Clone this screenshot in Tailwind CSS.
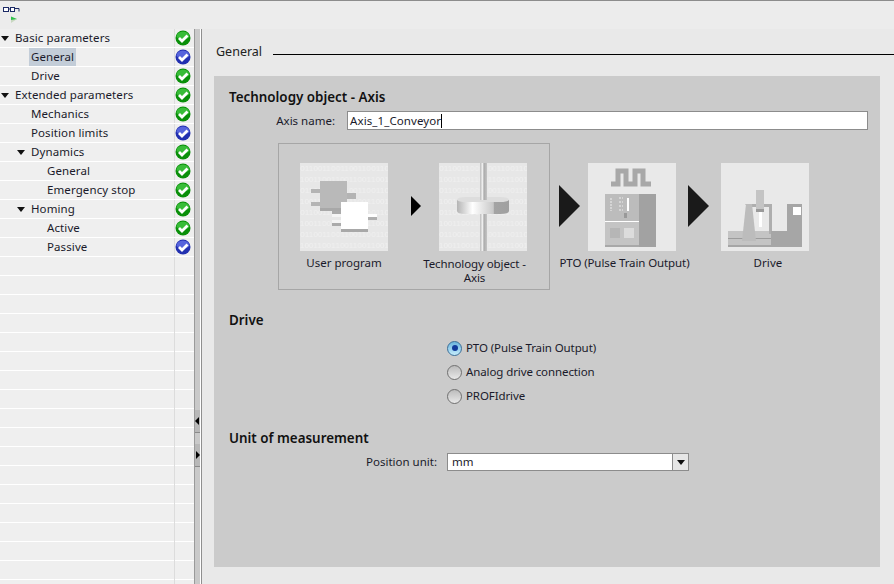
<!DOCTYPE html>
<html lang="en">
<head>
    <meta charset="UTF-8">
    <title>Technology object - Axis</title>
    <script src="https://cdn.jsdelivr.net/npm/@tailwindcss/browser@4"></script>
</head>
<body class="m-0 overflow-hidden bg-[#e9e9e9] font-['Noto_Sans',sans-serif] text-[11.5px] tracking-[0.1px] text-[#1a1a2a]">
<svg width="0" height="0" class="absolute">
    <defs>
        <symbol id="ok-green" viewBox="0 0 16 16">
            <circle cx="8" cy="8" r="7.5" fill="#0a8f0a"/>
            <path d="M1.5 7a6.5 5.5 0 0 1 13 0a8 6 0 0 1-13 0z" fill="#38bc38"/>
            <path d="M4 8l3 3 5.5-5.5" fill="none" stroke="#fff" stroke-width="2.8"/>
        </symbol>
        <symbol id="ok-blue" viewBox="0 0 16 16">
            <circle cx="8" cy="8" r="7.5" fill="#2230b0"/>
            <path d="M1.5 7a6.5 5.500 0 0 1 13 0a8 6 0 0 1-13 0z" fill="#5664dc"/>
            <path d="M4 8l3 3 5.5-5.5" fill="none" stroke="#fff" stroke-width="2.8"/>
        </symbol>
        <symbol id="tri" viewBox="0 0 8 5">
            <path d="M0 0h8L4 5z" fill="#111"/>
        </symbol>
        <pattern id="bits" width="35.6" height="22" patternUnits="userSpaceOnUse">
            <rect width="36" height="22" fill="#e7e7e7"/>
            <text x="-8.9" y="8" font-family="Liberation Sans" font-size="8" fill="#f1f1f1">100110011001</text>
            <text x="-17.8" y="19" font-family="Liberation Sans" font-size="8" fill="#f1f1f1">1001100110011</text>
        </pattern>
    </defs>
</svg>

<div class="flex h-[584px] w-[894px] flex-col">
    <div class="h-[1px] bg-[#8c8c8c]"></div>
    <!-- toolbar -->
    <div class="flex h-[28px] items-start bg-[#ececec] pl-[3px] pt-[5px]">
        <svg width="18" height="18" viewBox="0 0 18 18">
            <rect x="0.5" y="1.500" width="5" height="4" fill="#fff" stroke="#1c2a66"/>
            <rect x="7.5" y="1.500" width="4" height="4" fill="#fff" stroke="#1c2a66"/>
            <path d="M5.5 3h2M11.5 2.500h4.500v3" fill="none" stroke="#1c2a66"/>
            <path d="M8 10.500l6 2.500-6 2.500z" fill="#2fc04a"/>
            <path d="M8 14l6-1-6 4z" fill="#c8d8c0"/>
        </svg>
    </div>

    <div class="flex min-h-0 flex-1">
        <!-- tree -->
        <div class="w-[194px] shrink-0 overflow-hidden bg-[#efefef]">
            <div class="flex h-[19px] border-b border-white">
                <div class="flex w-[174px] items-center pl-[1px]"><svg width="8" height="5"><use href="#tri"/></svg><span class="ml-[6px]">Basic parameters</span></div>
                <div class="flex w-[20px] items-center justify-center border-l border-[#dcdcdc] pr-[3px]"><svg width="16" height="16"><use href="#ok-green"/></svg></div>
            </div>
            <div class="flex h-[19px] border-b border-white">
                <div class="flex w-[174px] items-center pl-[29px]"><span class="bg-[#c3cdd8] px-[2px] leading-[18px]">General</span></div>
                <div class="flex w-[20px] items-center justify-center border-l border-[#dcdcdc] pr-[3px]"><svg width="16" height="16"><use href="#ok-blue"/></svg></div>
            </div>
            <div class="flex h-[19px] border-b border-white">
                <div class="flex w-[174px] items-center pl-[31px]">Drive</div>
                <div class="flex w-[20px] items-center justify-center border-l border-[#dcdcdc] pr-[3px]"><svg width="16" height="16"><use href="#ok-green"/></svg></div>
            </div>
            <div class="flex h-[19px] border-b border-white">
                <div class="flex w-[174px] items-center pl-[1px]"><svg width="8" height="5"><use href="#tri"/></svg><span class="ml-[6px]">Extended parameters</span></div>
                <div class="flex w-[20px] items-center justify-center border-l border-[#dcdcdc] pr-[3px]"><svg width="16" height="16"><use href="#ok-green"/></svg></div>
            </div>
            <div class="flex h-[19px] border-b border-white">
                <div class="flex w-[174px] items-center pl-[31px]">Mechanics</div>
                <div class="flex w-[20px] items-center justify-center border-l border-[#dcdcdc] pr-[3px]"><svg width="16" height="16"><use href="#ok-green"/></svg></div>
            </div>
            <div class="flex h-[19px] border-b border-white">
                <div class="flex w-[174px] items-center pl-[31px]">Position limits</div>
                <div class="flex w-[20px] items-center justify-center border-l border-[#dcdcdc] pr-[3px]"><svg width="16" height="16"><use href="#ok-blue"/></svg></div>
            </div>
            <div class="flex h-[19px] border-b border-white">
                <div class="flex w-[174px] items-center pl-[17px]"><svg width="8" height="5"><use href="#tri"/></svg><span class="ml-[6px]">Dynamics</span></div>
                <div class="flex w-[20px] items-center justify-center border-l border-[#dcdcdc] pr-[3px]"><svg width="16" height="16"><use href="#ok-green"/></svg></div>
            </div>
            <div class="flex h-[19px] border-b border-white">
                <div class="flex w-[174px] items-center pl-[47px]">General</div>
                <div class="flex w-[20px] items-center justify-center border-l border-[#dcdcdc] pr-[3px]"><svg width="16" height="16"><use href="#ok-green"/></svg></div>
            </div>
            <div class="flex h-[19px] border-b border-white">
                <div class="flex w-[174px] items-center pl-[47px]">Emergency stop</div>
                <div class="flex w-[20px] items-center justify-center border-l border-[#dcdcdc] pr-[3px]"><svg width="16" height="16"><use href="#ok-green"/></svg></div>
            </div>
            <div class="flex h-[19px] border-b border-white">
                <div class="flex w-[174px] items-center pl-[17px]"><svg width="8" height="5"><use href="#tri"/></svg><span class="ml-[6px]">Homing</span></div>
                <div class="flex w-[20px] items-center justify-center border-l border-[#dcdcdc] pr-[3px]"><svg width="16" height="16"><use href="#ok-green"/></svg></div>
            </div>
            <div class="flex h-[19px] border-b border-white">
                <div class="flex w-[174px] items-center pl-[47px]">Active</div>
                <div class="flex w-[20px] items-center justify-center border-l border-[#dcdcdc] pr-[3px]"><svg width="16" height="16"><use href="#ok-green"/></svg></div>
            </div>
            <div class="flex h-[19px] border-b border-white">
                <div class="flex w-[174px] items-center pl-[47px]">Passive</div>
                <div class="flex w-[20px] items-center justify-center border-l border-[#dcdcdc] pr-[3px]"><svg width="16" height="16"><use href="#ok-blue"/></svg></div>
            </div>
            <!-- empty rows -->
            <div class="h-[328px] bg-[repeating-linear-gradient(to_bottom,#efefef_0,#efefef_18px,#fff_18px,#fff_19px)] pl-[174px]"><div class="h-full border-l border-[#dcdcdc]"></div></div>
        </div>

        <!-- scrollbar / splitter -->
        <div class="relative w-[7px] shrink-0 border-l border-r border-l-[#9a9a9a] border-r-white bg-[#c9c9c9]">
            <div class="absolute left-0 top-[381px] flex h-[23px] w-[5px] items-center bg-[#b8b8b8] border-b border-[#8a8a8a]"><div class="h-0 w-0 border-y-[4px] border-r-[4px] border-y-transparent border-r-black"></div></div>
            <div class="absolute left-0 top-[415px] flex h-[23px] w-[5px] items-center justify-end bg-[#b8b8b8] border-b border-[#8a8a8a]"><div class="h-0 w-0 border-y-[4px] border-l-[4px] border-y-transparent border-l-black"></div></div>
        </div>

        <!-- main -->
        <div class="min-w-0 flex-1 border-l border-[#8f8f8f] pl-[12px] pr-[14px] pt-[13px]">
            <div class="flex h-[34px] items-start">
                <span class="pl-[2px] text-[12.5px] leading-[20px] tracking-normal text-[#222]">General</span>
                <div class="ml-[11px] mr-[-14px] mt-[12px] h-[1px] flex-1 bg-black"></div>
            </div>
            <div class="h-[491px] bg-[#cbcbcb] pl-[15px] pt-[13px]">
                <h3 class="text-[13.4px] font-semibold leading-[16px] tracking-normal text-[#111]">Technology object - Axis</h3>
                <div class="mt-[6px] flex h-[19px] items-center">
                    <label class="w-[106px] text-right tracking-normal">Axis name:</label>
                    <div class="ml-[12px] flex h-[19px] w-[521px] items-center border border-[#8c8c8c] bg-white pl-[2px]"><span>Axis_1_Conveyor</span><span class="h-[14px] w-[1px] bg-black"></span></div>
                </div>

                <!-- diagram -->
                <div class="mt-[13px] flex items-start pl-[49px]">
                    <div class="h-[147px] w-[272px] border border-[#a6a6a6] pl-[21px] pt-[19px]">
                        <div class="flex items-start">
                            <div class="w-[88px]">
                                <svg class="block" width="88" height="88" viewBox="0 0 88 88">
                                    <rect width="88" height="88" fill="url(#bits)"/>
                                    <path d="M11 26h9v4h-9zM11 39h9v4h-9zM47 30h9v6h-9z" fill="#b4b4b4"/>
                                    <rect x="20" y="18" width="27" height="27" fill="#b9b9b9"/>
                                    <rect x="20" y="45" width="27" height="3" fill="#a8a8a8"/>
                                    <path d="M32 48h9v3h-9zM32 60h9v3h-9z" fill="#aaa"/>
                                    <path d="M32 51h9v3h-9zM32 57h9v3h-9z" fill="#f4f4f4"/>
                                    <rect x="41" y="39" width="27" height="27" fill="#fff"/>
                                    <rect x="68" y="51" width="9" height="3" fill="#fff"/>
                                    <rect x="68" y="54" width="9" height="3" fill="#b0b0b0"/>
                                    <rect x="41" y="66" width="27" height="3" fill="#a8a8a8"/>
                                </svg>
                                <div class="mt-[4px] text-center leading-[16px] tracking-normal">User program</div>
                            </div>
                            <div class="ml-[23px] mt-[33px] h-0 w-0 border-y-[10px] border-l-[10px] border-y-transparent border-l-black"></div>
                            <div class="ml-[18px] w-[88px]">
                                <svg class="block" width="88" height="88" viewBox="0 0 88 88">
                                    <defs>
                                        <linearGradient id="rod"><stop offset="0" stop-color="#bbb"/><stop offset=".4" stop-color="#f4f4f4"/><stop offset=".55" stop-color="#aaa"/><stop offset="1" stop-color="#c4c4c4"/></linearGradient>
                                        <linearGradient id="disc"><stop offset="0" stop-color="#b4b4b4"/><stop offset=".3" stop-color="#fff"/><stop offset=".7" stop-color="#c8c8c8"/><stop offset=".71" stop-color="#a4a4a4"/><stop offset="1" stop-color="#a0a0a0"/></linearGradient>
                                    </defs>
                                    <rect width="88" height="88" fill="url(#bits)"/>
                                    <rect x="41" y="0" width="7" height="88" fill="url(#rod)"/>
                                    <path d="M18 37v11q0 3 9 3h34q9 0 9-3V37z" fill="url(#disc)"/>
                                    <path d="M18 37q0-3 9-3h14v3h7v-3h13q9 0 9 3q-2 2-9 2H27q-7 0-9-2z" fill="#ddd"/>
                                </svg>
                                <div class="ml-[-25px] mr-[-8px] mt-[6px] whitespace-nowrap text-center leading-[14px] tracking-[-0.1px]">Technology object -<br>Axis</div>
                            </div>
                        </div>
                    </div>
                    <div class="ml-[9px] mt-[42px] h-0 w-0 border-y-[21px] border-l-[21px] border-y-transparent border-l-[#1a1a1a]"></div>
                    <div class="ml-[8px] mt-[20px] w-[88px]">
                        <svg class="block" width="88" height="88" viewBox="0 0 88 88">
                            <rect width="88" height="88" fill="#e9e9e9"/>
                            <path d="M23 21h7V8h8v13h9V8h8v13h8" fill="none" stroke="#a8a8a8" stroke-width="5"/>
                            <rect x="17" y="31" width="51" height="53" fill="#bcbcbc"/>
                            <rect x="51" y="31" width="17" height="53" fill="#a2a2a2"/>
                            <rect x="17" y="58" width="34" height="1" fill="#fff"/>
                            <rect x="17" y="59" width="34" height="25" fill="#c4c4c4"/>
                            <rect x="17" y="82" width="34" height="2" fill="#a8a8a8"/>
                            <rect x="39" y="35" width="2" height="13" fill="#fff"/>
                            <path d="M23 35v13M31 35h4M31 39h4M31 43h4M31 47h4" stroke="#eee" fill="none" stroke-dasharray="2 1"/>
                            <rect x="36" y="50" width="3" height="5" fill="#999"/>
                            <rect x="22" y="65" width="10" height="10" fill="#b6b6b6"/>
                            <rect x="36" y="65" width="10" height="10" fill="#dcdcdc"/>
                        </svg>
                        <div class="ml-[-40px] mr-[-25px] mt-[4px] whitespace-nowrap text-center leading-[16px] tracking-[-0.1px]">PTO (Pulse Train Output)</div>
                    </div>
                    <div class="ml-[12px] mt-[42px] h-0 w-0 border-y-[21px] border-l-[21px] border-y-transparent border-l-[#1a1a1a]"></div>
                    <div class="ml-[12px] mt-[20px] w-[88px]">
                        <svg class="block" width="88" height="88" viewBox="0 0 88 88">
                            <rect width="88" height="88" fill="#e9e9e9"/>
                            <rect x="7" y="68" width="60" height="16" fill="#c4c4c4"/>
                            <rect x="7" y="75" width="60" height="1" fill="#9c9c9c"/>
                            <rect x="7" y="82" width="74" height="2" fill="#a6a6a6"/>
                            <path d="M24 41h27v30h-3V44H27z" fill="#aeaeae"/>
                            <path d="M21 78l4-37h6l4 37z" fill="#bcbcbc"/>
                            <rect x="35" y="27" width="8" height="21" fill="#c4c4c4"/>
                            <rect x="35" y="46" width="8" height="3" fill="#9a9a9a"/>
                            <rect x="38" y="49" width="3" height="15" fill="#fff"/>
                            <rect x="50" y="68" width="19" height="16" fill="#a6a6a6"/>
                            <rect x="66" y="41" width="15" height="41" fill="#a6a6a6"/>
                            <rect x="72" y="44" width="8" height="8" fill="#fff"/>
                        </svg>
                        <div class="ml-[3px] mr-[-3px] mt-[4px] text-center leading-[16px]">Drive</div>
                    </div>
                </div>

                <h3 class="mt-[22px] text-[13.4px] font-semibold leading-[16px] tracking-normal text-[#111]">Drive</h3>

                <div class="ml-[218px] mt-[12px] flex flex-col gap-[8px]">
                    <div class="flex h-[16px] items-center gap-[4px]">
                        <div class="flex size-[15px] items-center justify-center rounded-full border border-[#3a6e98] bg-gradient-to-b from-[#6ab4dc] to-[#c4ecfc]"><div class="size-[6px] rounded-full bg-[#123a9a]"></div></div>
                        <span class="tracking-[-0.1px]">PTO (Pulse Train Output)</span>
                    </div>
                    <div class="flex h-[16px] items-center gap-[4px]">
                        <div class="size-[15px] rounded-full border border-[#707070] bg-gradient-to-b from-[#bcbcbc] to-[#e8e8e8]"></div>
                        <span class="tracking-[-0.1px]">Analog drive connection</span>
                    </div>
                    <div class="flex h-[16px] items-center gap-[4px]">
                        <div class="size-[15px] rounded-full border border-[#707070] bg-gradient-to-b from-[#bcbcbc] to-[#e8e8e8]"></div>
                        <span class="tracking-[-0.1px]">PROFIdrive</span>
                    </div>
                </div>

                <h3 class="mt-[26px] text-[13.4px] font-semibold leading-[16px] tracking-normal text-[#111]">Unit of measurement</h3>
                <div class="mt-[7px] flex h-[18px] items-center">
                    <label class="w-[208px] text-right tracking-normal">Position unit:</label>
                    <div class="ml-[10px] flex h-[18px] w-[242px] items-center border border-[#8c8c8c] bg-white">
                        <span class="flex-1 pl-[4px]">mm</span>
                        <div class="flex h-full w-[16px] items-center justify-center border-l border-[#8c8c8c] bg-[#e6e6e6]"><svg width="8" height="5"><use href="#tri"/></svg></div>
                    </div>
                </div>
            </div>
        </div>
    </div>
</div>
</body>
</html>
